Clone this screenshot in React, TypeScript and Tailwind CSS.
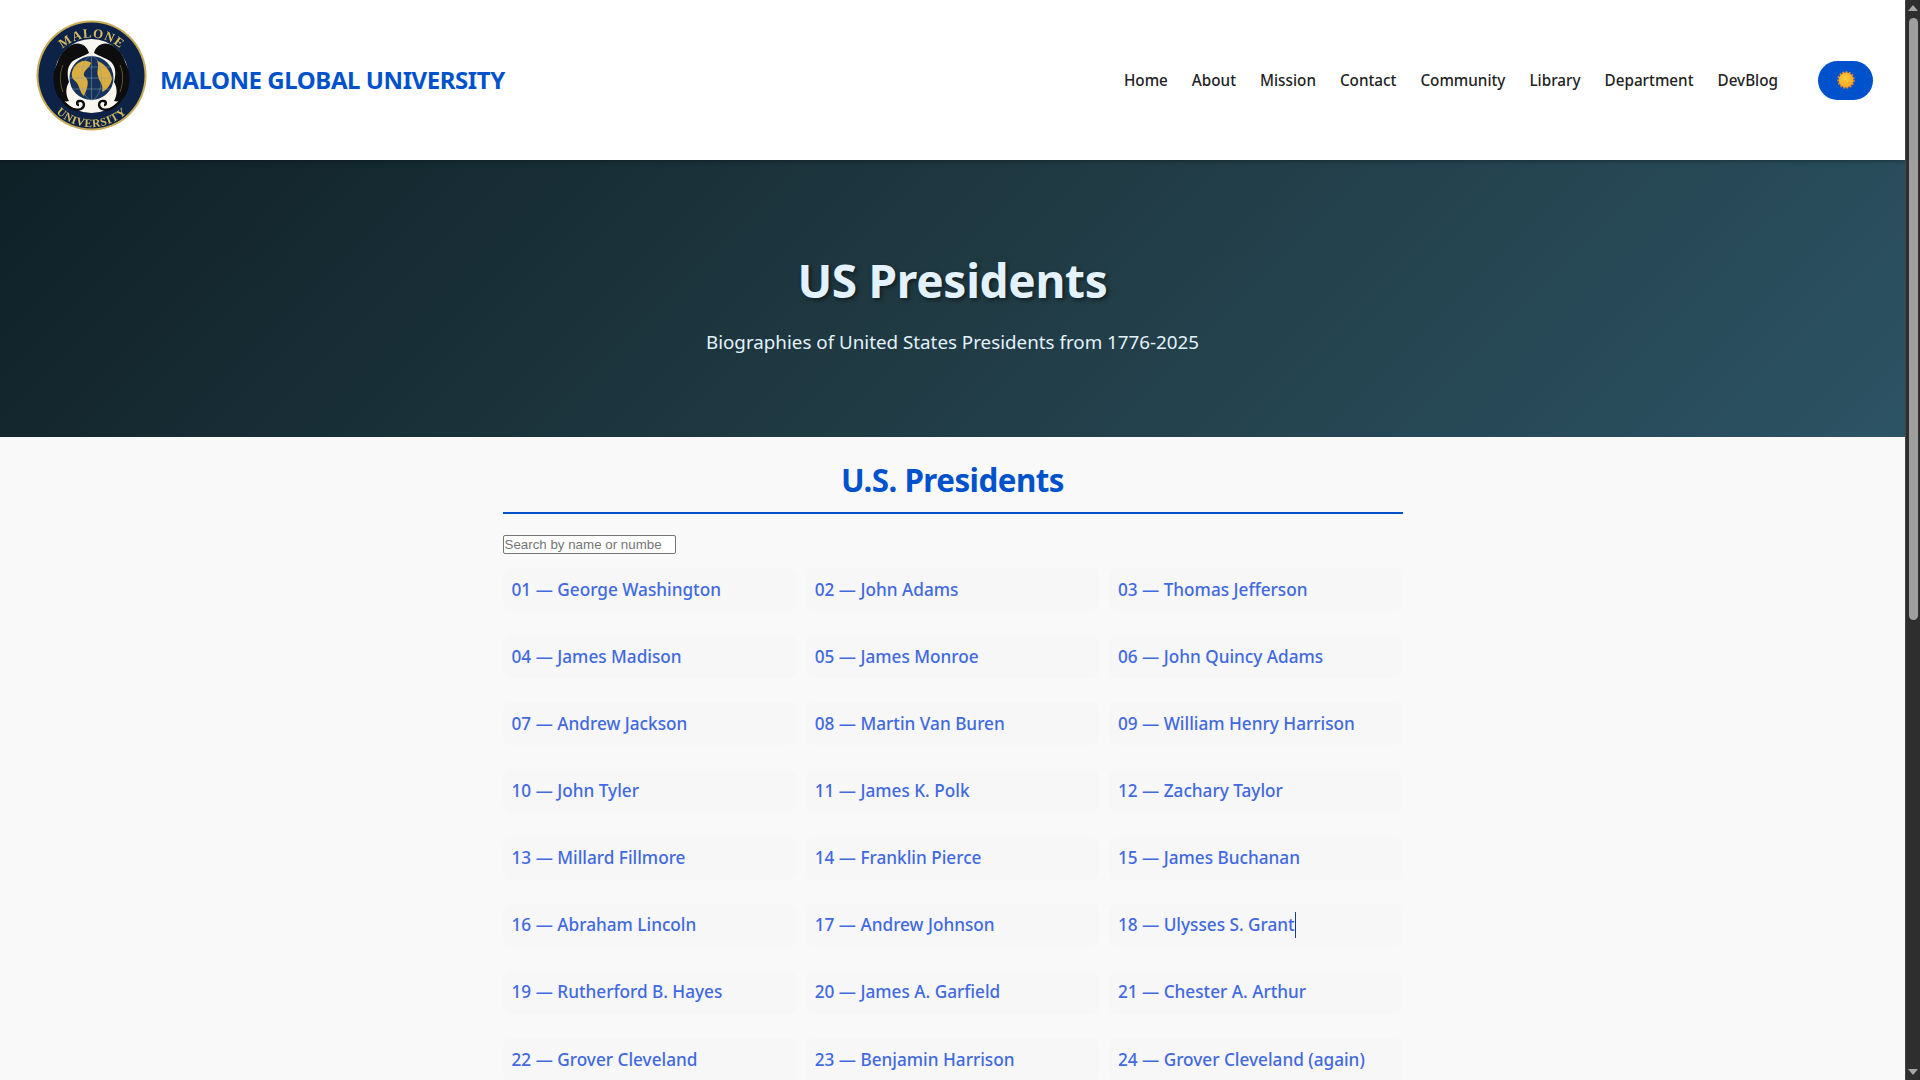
import React from "react";

const navLinks = ["Home", "About", "Mission", "Contact", "Community", "Library", "Department", "DevBlog"];

const presidents = [
  "01 — George Washington", "02 — John Adams", "03 — Thomas Jefferson",
  "04 — James Madison", "05 — James Monroe", "06 — John Quincy Adams",
  "07 — Andrew Jackson", "08 — Martin Van Buren", "09 — William Henry Harrison",
  "10 — John Tyler", "11 — James K. Polk", "12 — Zachary Taylor",
  "13 — Millard Fillmore", "14 — Franklin Pierce", "15 — James Buchanan",
  "16 — Abraham Lincoln", "17 — Andrew Johnson", "18 — Ulysses S. Grant",
  "19 — Rutherford B. Hayes", "20 — James A. Garfield", "21 — Chester A. Arthur",
  "22 — Grover Cleveland", "23 — Benjamin Harrison", "24 — Grover Cleveland (again)",
];

// University seal, redrawn by hand
const Seal = () => (
  <svg width="111" height="111" viewBox="0 0 111 111" className="shrink-0 mb-[9px]">
    <defs>
      <path id="sealTop" d="M 13 60 A 42.5 42.5 0 0 1 98 60" />
      <path id="sealBottom" d="M 4.5 56 A 51 51 0 0 0 106.5 56" />
      <filter id="soft"><feGaussianBlur stdDeviation="0.35" /></filter>
      <g id="panther">
        <path d="M53 33 C51 26 45 22 38 24 C30 27 24 34 21 44 C16 53 17 64 20 72 C22 78 27 83 33 81 C29 74 30 67 33 62 C31 55 31 48 35 43 C39 38 47 37 53 33 Z" fill="#080808" />
        <path d="M24 74 C27 85 37 92 45 89 C50 86 48 80 43 81 C40 82 41 85 43 85" fill="none" stroke="#080808" strokeWidth="2.4" />
        <path d="M27 45 C23 54 24 64 27 72" fill="none" stroke="#c9a94e" strokeWidth="0.5" />
      </g>
    </defs>
    <g filter="url(#soft)">
      <circle cx="55.5" cy="55.5" r="55" fill="#c9ab55" />
      <circle cx="55.5" cy="55.5" r="53" fill="#0a2146" />
      <circle cx="55.5" cy="56" r="37" fill="#f8f6ee" />
      <circle cx="55.5" cy="58" r="22" fill="#12305a" />
      <path d="M39 46 C45 39 52 40 55 43 C53 49 47 50 48 56 C53 59 53 65 48 76 C43 72 44 64 38 60 C34 56 36 50 39 46 Z" fill="#dcae3c" />
      <path d="M61 41 C69 43 75 52 76 59 C74 67 70 70 66 72 C68 64 63 62 62 56 C60 50 64 48 61 41 Z" fill="#dcae3c" />
      <g fill="none" stroke="#8fa0b4" strokeWidth="0.5">
        <ellipse cx="55.5" cy="58" rx="10" ry="22" />
        <path d="M55.5 36 V80 M33.5 58 H77.5 M37 47 H74 M37 69 H74" />
      </g>
      <use href="#panther" />
      <use href="#panther" transform="translate(111 0) scale(-1 1)" />
      <text fontFamily="'Liberation Serif', serif" fontSize="13" fontWeight="700" fill="#d8bb63" letterSpacing="0.8">
        <textPath href="#sealTop" startOffset="50%" textAnchor="middle">MALONE</textPath>
      </text>
      <text fontFamily="'Liberation Serif', serif" fontSize="11.5" fontWeight="700" fill="#d8bb63" letterSpacing="0.6">
        <textPath href="#sealBottom" startOffset="50%" textAnchor="middle">UNIVERSITY</textPath>
      </text>
    </g>
  </svg>
);

const Sun = () => (
  <svg width="18" height="18" viewBox="0 0 20 20">
    <defs>
      <radialGradient id="sunFill" cx="45%" cy="40%" r="60%">
        <stop offset="0%" stopColor="#ffd23f" />
        <stop offset="100%" stopColor="#f7a41d" />
      </radialGradient>
    </defs>
    <circle cx="10" cy="10" r="8.8" fill="none" stroke="#ef8430" strokeWidth="1.8" strokeDasharray="2.2 1.5" />
    <circle cx="10" cy="10" r="8.2" fill="url(#sunFill)" />
  </svg>
);

const ScrollBar = () => (
  <div className="w-[15px] shrink-0 h-screen bg-[#2e2e2e] border-l border-[#454545] flex flex-col items-center">
    <svg width="10" height="6" viewBox="0 0 10 6" className="mt-[5px] shrink-0">
      <path d="M5 0 L10 6 H0 Z" fill="#a6a6a6" />
    </svg>
    <div className="w-[9px] h-[602px] mt-[7px] rounded-full bg-[#9f9f9f] shrink-0" />
    <svg width="10" height="6" viewBox="0 0 10 6" className="mt-auto mb-[5px] shrink-0">
      <path d="M0 0 H10 L5 6 Z" fill="#a6a6a6" />
    </svg>
  </div>
);

export default function App() {
  return (
    <div className="flex h-screen overflow-hidden font-['Noto_Sans','Open_Sans',sans-serif]">
      <div className="flex-1 min-w-0 overflow-hidden bg-[#f9f9f9]">
        <header className="relative z-10 h-[160px] bg-white flex items-center pl-[36px] pr-[32px] shadow-[0_2px_4px_rgba(0,0,0,0.25)]">
          <Seal />
          <span className="ml-[13px] text-[24px] tracking-[-0.43px] font-bold text-[#0052cc] whitespace-nowrap">
            MALONE GLOBAL UNIVERSITY
          </span>
          <nav className="ml-auto flex items-center gap-[24px] pt-[1px] text-[15.25px] font-medium text-[#222]">
            {navLinks.map((link) => (
              <a key={link} className="whitespace-nowrap">{link}</a>
            ))}
          </nav>
          <button className="ml-[40px] w-[55px] h-[39px] rounded-[20px] bg-[#0052cc] flex items-center justify-center">
            <Sun />
          </button>
        </header>

        <section className="h-[277px] bg-[linear-gradient(135deg,#0f2027,#203a43,#2c5364)] flex flex-col items-center pt-[93px]">
          <h1 className="text-[46px] leading-[1.2] tracking-[-0.3px] font-bold text-[#e3f2fd] [text-shadow:2px_2px_4px_rgba(0,0,0,0.5)]">
            US Presidents
          </h1>
          <p className="mt-[20px] text-[18.8px] text-[#e3f2fd]">
            Biographies of United States Presidents from 1776-2025
          </p>
        </section>

        <main className="w-[900px] mx-auto pt-[20px]">
          <h2 className="text-[31.3px] leading-[46px] tracking-[-0.5px] font-bold text-[#0052cc] text-center pb-[9px] border-b-2 border-[#0052cc]">
            U.S. Presidents
          </h2>
          <input
            placeholder="Search by name or number"
            className="block mt-[21px] w-[173px] h-[19px] pl-[1px] pr-[13px] border border-[#767676] rounded-[2px] bg-white font-['Liberation_Sans',sans-serif] text-[13.33px] placeholder:text-[#757575] outline-none"
          />
          <div className="mt-[14px] grid grid-cols-3 gap-x-[9.6px] gap-y-[24.15px]">
            {presidents.map((name) => (
              <div key={name} className="h-[43px] rounded-[8px] bg-[#f7f7f7] px-[9px] flex items-center">
                <a className="relative text-[17.2px] font-medium text-[#4169e1] whitespace-nowrap">
                  {name}
                  {name.includes("Grant") && (
                    <span className="absolute right-[-1px] top-0 bottom-0 w-px bg-[#1a3a9c]" />
                  )}
                </a>
              </div>
            ))}
          </div>
        </main>
      </div>
      <ScrollBar />
    </div>
  );
}
